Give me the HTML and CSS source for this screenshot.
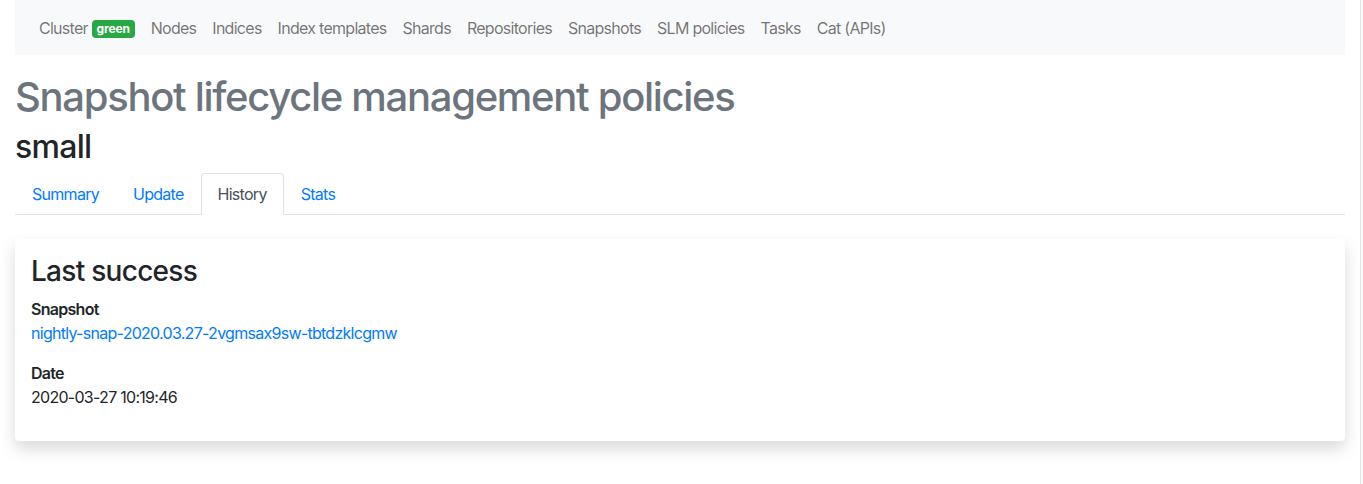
FILE: index.html
```html
<!DOCTYPE html>
<html lang="en">
<head>
<meta charset="utf-8">
<title>Snapshot lifecycle management policies</title>
<link rel="stylesheet" href="styles.css">
</head>
<body>
<div class="page">
  <nav class="navbar">
    <a class="nav-link" href="#">Cluster <span class="badge">green</span></a>
    <a class="nav-link" href="#">Nodes</a>
    <a class="nav-link" href="#">Indices</a>
    <a class="nav-link" href="#">Index templates</a>
    <a class="nav-link" href="#">Shards</a>
    <a class="nav-link" href="#">Repositories</a>
    <a class="nav-link" href="#">Snapshots</a>
    <a class="nav-link" href="#">SLM policies</a>
    <a class="nav-link" href="#">Tasks</a>
    <a class="nav-link" href="#">Cat (APIs)</a>
  </nav>
  <h1 class="title">Snapshot lifecycle management policies</h1>
  <h2 class="subtitle">small</h2>
  <ul class="tabs">
    <li><a class="tab" href="#">Summary</a></li>
    <li><a class="tab" href="#">Update</a></li>
    <li><a class="tab active" href="#">History</a></li>
    <li><a class="tab" href="#">Stats</a></li>
  </ul>
  <div class="card">
    <h3 class="card-title">Last success</h3>
    <dl class="details">
      <dt>Snapshot</dt>
      <dd><a class="link" href="#">nightly-snap-2020.03.27-2vgmsax9sw-tbtdzklcgmw</a></dd>
      <dt>Date</dt>
      <dd>2020-03-27 10:19:46</dd>
    </dl>
  </div>
</div>
<div class="scroll-edge"></div>
</body>
</html>
```

FILE: styles.css
```css
* { box-sizing: border-box; }

html, body {
  margin: 0;
  background: #fff;
  font-family: Inter, "Liberation Sans", Arial, sans-serif;
  font-size: 16px;
  line-height: 1.5;
  letter-spacing: -0.72px;
  color: #212529;
}

.page {
  width: 1360px;
  min-height: 484px;
  padding: 0 15px 40px;
}

.navbar {
  display: flex;
  align-items: center;
  height: 55px;
  padding: 0 16px;
  background: #f8f9fa;
}

.nav-link {
  display: block;
  padding: 8px;
  color: rgba(0, 0, 0, 0.55);
  text-decoration: none;
  white-space: nowrap;
}

.badge {
  display: inline-block;
  padding: 3px 4.8px;
  font-size: 12px;
  font-weight: 700;
  line-height: 1;
  letter-spacing: -0.1px;
  color: #fff;
  background: #28a745;
  border-radius: 4px;
  vertical-align: 1px;
}

.title {
  margin: 18px 0 0;
  font-size: 40px;
  font-weight: 500;
  line-height: 1.2;
  letter-spacing: -1.3px;
  color: #6c757d;
}

.subtitle {
  margin: 7px 0 0;
  font-size: 32px;
  font-weight: 500;
  line-height: 1.2;
  color: #212529;
}

.tabs {
  display: flex;
  list-style: none;
  margin: 7px 0 0;
  padding: 0;
  border-bottom: 1px solid #dee2e6;
}

.tabs li {
  margin-bottom: -1px;
}

.tab {
  display: block;
  padding: 8px 16px;
  color: #007bff;
  text-decoration: none;
  border: 1px solid transparent;
  border-radius: 4px 4px 0 0;
}

.tab.active {
  color: #495057;
  background: #fff;
  border-color: #dee2e6 #dee2e6 #fff;
}

.card {
  margin-top: 24px;
  padding: 16px;
  background: #fff;
  border-radius: 4px;
  box-shadow: 0 8px 16px rgba(0, 0, 0, 0.15);
}

.card-title {
  margin: 0 0 8px;
  font-size: 28px;
  font-weight: 500;
  line-height: 1.2;
}

.details {
  margin: 0;
}

.details dt {
  font-weight: 600;
}

.details dd {
  margin: 0 0 16px;
}

.link {
  color: #007bff;
  text-decoration: none;
}

.scroll-edge {
  position: fixed;
  top: 0;
  right: 0;
  bottom: 0;
  width: 3px;
  border-left: 1px solid #e3e3e3;
  background: #fafafa;
}
```
